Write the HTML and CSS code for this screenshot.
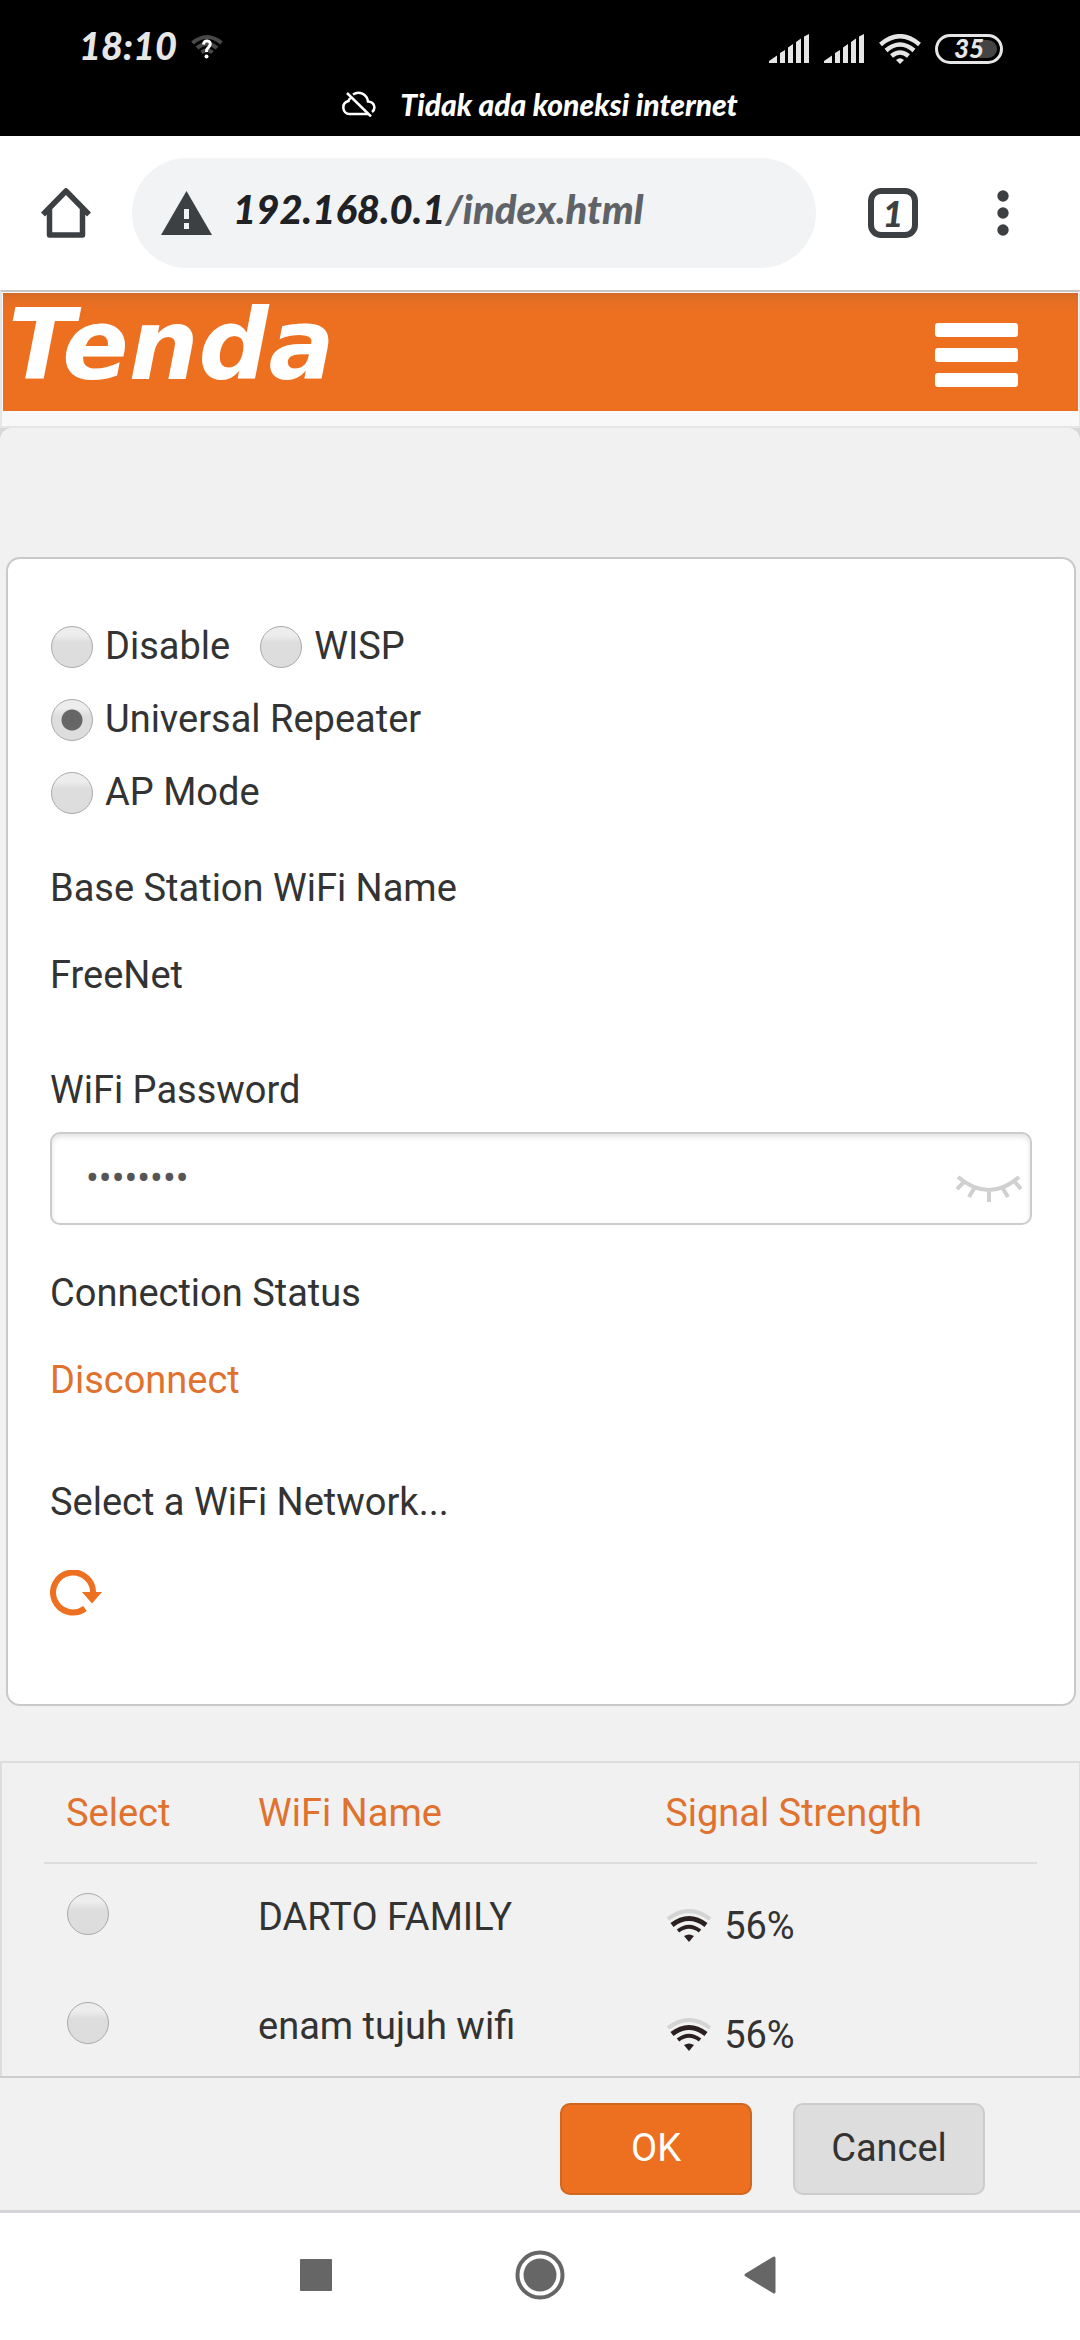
FILE: index.html
```html
<!DOCTYPE html>
<html lang="en">
<head>
<meta charset="utf-8">
<meta name="viewport" content="width=device-width, initial-scale=1">
<title>Tenda</title>
<link rel="stylesheet" href="styles.css">
</head>
<body>
<div class="status">
  <div class="status-row">
    <div class="status-group">
      <span class="clock">18:10</span>
      <svg class="wifi-unknown" width="32" height="26" viewBox="0 0 32 26" aria-hidden="true">
        <g fill="none" stroke="#484848" stroke-width="4"><path d="M1.500 9Q16-3 30.500 9"/><path d="M6 14Q16 5.500 26 14"/><path d="M10.500 18.500Q16 14 21.500 18.500"/></g>
        <path d="M12.500 10.500Q13 6.500 16.500 7Q20 7.500 19 11Q18.200 13 16.500 14.500Q15.300 15.500 15.500 18" fill="none" stroke="#fff" stroke-width="3"/>
        <circle cx="15.500" cy="22.500" r="2" fill="#fff"/>
      </svg>
    </div>
    <div class="status-group status-icons">
      <svg width="41" height="30" viewBox="0 0 41 30" fill="#e6e6e6" aria-hidden="true"><path d="M0 27L8 21.500V29H0zM11 19L16 16V29H11zM19 13.500L24 10V29H19zM27 8L32 4.500V29H27zM35 2.500L40 0V29H35z"/></svg>
      <svg width="41" height="30" viewBox="0 0 41 30" fill="#e6e6e6" aria-hidden="true"><path d="M0 27L8 21.500V29H0zM11 19L16 16V29H11zM19 13.500L24 10V29H19zM27 8L32 4.500V29H27zM35 2.500L40 0V29H35z"/></svg>
      <svg class="wifi-full" width="42" height="30" viewBox="0 0 42 30" aria-hidden="true">
        <g fill="none" stroke="#e6e6e6" stroke-width="4.500"><path d="M1.500 10.500Q21-6 40.500 10.500"/><path d="M7 16.500Q21 4.500 35 16.500"/><path d="M12.500 22Q21 15 29.500 22"/></g>
        <path d="M17 26Q21 22.500 25 26L21 30z" fill="#e6e6e6"/>
      </svg>
      <span class="battery">35</span>
    </div>
  </div>
  <div class="status-note">
    <svg width="34" height="26" viewBox="0 0 34 26" fill="none" stroke="#fff" stroke-width="2.500" aria-hidden="true"><path d="M5 2L29 25.500"/><path d="M11 3.500C17-.5 25 3 26 10.500C33 11 34 18 30 21M9 7C7 8 6.500 9.500 6.500 10C-1 12 0 22.500 7.500 23H26"/></svg>
    <span>Tidak ada koneksi internet</span>
  </div>
</div>

<div class="browser-bar">
  <button class="bare" type="button" aria-label="Home">
    <svg width="50" height="50" viewBox="0 0 50 50" fill="none" stroke="#3c4043" stroke-width="5.500" stroke-linejoin="round" aria-hidden="true"><path d="M2 26.500L25 3L48 26.500M8.500 21V47H41.500V21"/></svg>
  </button>
  <div class="address">
    <svg width="51" height="44" viewBox="0 0 51 44" aria-hidden="true"><path d="M25.500 0L51 44H0z" fill="#3c4043"/><path d="M23 18h5v10h-5zM23 32h5v6h-5z" fill="#f1f3f4"/></svg>
    <div class="url" role="textbox" aria-label="Address">192.168.0.1<span class="url-path">/index.html</span></div>
  </div>
  <button class="bare tabs" type="button" aria-label="Tabs">1</button>
  <button class="bare" type="button" aria-label="More">
    <svg width="12" height="46" viewBox="0 0 12 46" fill="#3c4043" aria-hidden="true"><circle cx="6" cy="6" r="5.700"/><circle cx="6" cy="23" r="5.700"/><circle cx="6" cy="40" r="5.700"/></svg>
  </button>
</div>

<header class="site-header">
  <div class="brand-bar">
    <a class="brand" href="#">Tenda</a>
    <button class="bare menu" type="button" aria-label="Menu"><i></i><i></i><i></i></button>
  </div>
</header>

<div class="sheet-back">
<main class="sheet">
  <form class="card" id="repeater">
    <fieldset class="modes">
      <div class="mode-row">
        <label><input type="radio" name="mode">Disable</label>
        <label><input type="radio" name="mode">WISP</label>
      </div>
      <div class="mode-row"><label><input type="radio" name="mode" checked>Universal Repeater</label></div>
      <div class="mode-row"><label><input type="radio" name="mode">AP Mode</label></div>
    </fieldset>
    <div class="field">
      <div>Base Station WiFi Name</div>
      <div>FreeNet</div>
    </div>
    <div class="field field-password">
      <label for="password">WiFi Password</label>
      <div class="password-box">
        <input id="password" type="password" value="12345678">
        <button class="bare eye" type="button" aria-label="Show password">
          <svg width="66" height="28" viewBox="0 0 66 28" fill="none" stroke="#d0d0d0" stroke-width="4" aria-hidden="true"><path d="M2 2Q33 28 63 2M9 6L1 14M19 12L13 22M33 15V27M46 12L52 22M58 6L65 14"/></svg>
        </button>
      </div>
    </div>
    <div class="field">
      <div>Connection Status</div>
      <div class="accent">Disconnect</div>
    </div>
    <div class="field field-scan">
      <div>Select a WiFi Network...</div>
      <button class="bare refresh" type="button" aria-label="Refresh">
        <svg width="52" height="46" viewBox="0 0 52 46" aria-hidden="true"><path d="M35 38.500A20 20 0 1 1 43 24" fill="none" stroke="#ed7020" stroke-width="6"/><path d="M32 22H52L42 33.500z" fill="#ed7020"/></svg>
      </button>
    </div>
  </form>

  <div class="networks">
    <table>
      <thead><tr><th class="col-select">Select</th><th class="col-name">WiFi Name</th><th>Signal Strength</th></tr></thead>
      <tbody>
        <tr>
          <td class="pick"><input type="radio" name="network" aria-label="DARTO FAMILY"></td>
          <td>DARTO FAMILY</td>
          <td><div class="signal"><svg width="44" height="34" viewBox="0 0 44 34" fill="none" aria-hidden="true"><path d="M1 10Q22-6 43 10" stroke="#d4d4d4" stroke-width="4"/><path d="M5 16Q22 3 39 16" stroke="#2b2020" stroke-width="5"/><path d="M11 22Q22 13.500 33 22" stroke="#2b2020" stroke-width="4"/><path d="M17 27Q22 24 27 27L22 33z" fill="#2b2020"/></svg>56%</div></td>
        </tr>
        <tr>
          <td class="pick"><input type="radio" name="network" aria-label="enam tujuh wifi"></td>
          <td>enam tujuh wifi</td>
          <td><div class="signal"><svg width="44" height="34" viewBox="0 0 44 34" fill="none" aria-hidden="true"><path d="M1 10Q22-6 43 10" stroke="#d4d4d4" stroke-width="4"/><path d="M5 16Q22 3 39 16" stroke="#2b2020" stroke-width="5"/><path d="M11 22Q22 13.500 33 22" stroke="#2b2020" stroke-width="4"/><path d="M17 27Q22 24 27 27L22 33z" fill="#2b2020"/></svg>56%</div></td>
        </tr>
      </tbody>
    </table>
  </div>
</main>
</div>

<footer class="actions">
  <button class="btn btn-ok" type="submit" form="repeater">OK</button>
  <button class="btn btn-cancel" type="button">Cancel</button>
</footer>

<nav class="system-nav">
  <button class="bare" type="button" aria-label="Recent apps"><svg width="32" height="32" viewBox="0 0 32 32" aria-hidden="true"><rect width="32" height="32" rx="1" fill="#666"/></svg></button>
  <button class="bare" type="button" aria-label="Home screen"><svg width="50" height="50" viewBox="0 0 50 50" aria-hidden="true"><circle cx="25" cy="25" r="22.500" fill="none" stroke="#666" stroke-width="4"/><circle cx="25" cy="25" r="16.500" fill="#666"/></svg></button>
  <button class="bare" type="button" aria-label="Back"><svg width="40" height="40" viewBox="0 0 40 40" aria-hidden="true"><path d="M2 20L30 3V37z" fill="#666" stroke="#666" stroke-width="3" stroke-linejoin="round"/></svg></button>
</nav>
</body>
</html>
```
FILE: styles.css
```css
* {
  box-sizing: border-box;
}

body {
  margin: 0;
  height: 100vh;
  display: flex;
  flex-direction: column;
  background: #fff;
  color: #333;
  font: 38px/44px Roboto, sans-serif;
}

svg {
  display: block;
  flex: none;
}

.bare {
  padding: 0;
  border: 0;
  background: none;
  color: inherit;
  font: inherit;
}

/* Phone status bar */
.status {
  flex: none;
  padding-bottom: 18px;
  background: #000;
  color: #fff;
  font-family: Lato, sans-serif;
  font-weight: 900;
  font-style: italic;
}

.status-row {
  display: flex;
  align-items: center;
  justify-content: space-between;
  height: 90px;
  padding: 0 77px 0 79px;
}

.status-group {
  display: flex;
  align-items: center;
  gap: 14px;
}

.status-icons {
  padding-top: 8px;
}

.wifi-unknown {
  margin-top: 4px;
}

.clock {
  color: #e6e6e6;
  font-size: 38px;
}

.battery {
  width: 68px;
  height: 30px;
  border: 3px solid #e6e6e6;
  border-radius: 15px;
  background: linear-gradient(to right, #000 38px, #444 38px) content-box;
  padding: 3px;
  color: #e6e6e6;
  font-size: 26px;
  line-height: 16px;
  text-align: center;
}

.status-note {
  display: flex;
  align-items: center;
  justify-content: center;
  gap: 24px;
  height: 28px;
  font-size: 30px;
  line-height: 28px;
}

/* Browser toolbar */
.browser-bar {
  flex: none;
  display: flex;
  align-items: center;
  padding: 22px 71px 22px 41px;
  color: #3c4043;
  font-family: Lato, sans-serif;
  font-weight: 900;
  font-style: italic;
}

.address {
  flex: 1;
  display: flex;
  align-items: center;
  gap: 21px;
  height: 110px;
  margin: 0 52px 0 41px;
  padding: 0 29px;
  border-radius: 55px;
  background: #f1f3f4;
}

.url {
  padding-bottom: 8px;
  color: #202124;
  font-size: 40px;
}

.url-path {
  color: #5f6368;
}

.tabs {
  width: 50px;
  height: 50px;
  margin-right: 79px;
  border: 6px solid #3c4043;
  border-radius: 13px;
  font-size: 36px;
  line-height: 36px;
}

/* Router page header */
.site-header {
  flex: none;
  padding: 1px 1px 15px;
  border: 2px solid #e6e6e6;
  border-width: 2px 1px 2px 2px;
  border-top-color: #c6c6c4;
  background: #f8f8f8;
}

.brand-bar {
  display: flex;
  align-items: flex-start;
  justify-content: space-between;
  height: 118px;
  padding: 0 60px 0 5px;
  background: linear-gradient(#d46a26, #e36e24 7px, #ed7020 18px);
}

.brand {
  color: #fff;
  font: italic 700 98px/104px "DejaVu Sans", sans-serif;
  text-decoration: none;
}

.menu {
  display: grid;
  gap: 11px;
  padding-top: 30px;
}

.menu i {
  width: 83px;
  height: 14px;
  border-radius: 3px;
  background: #fff;
}

/* Settings */
.sheet-back {
  flex: 1;
  min-height: 0;
  display: flex;
  background: #d8d8d8;
}

.sheet {
  flex: 1;
  overflow: hidden;
  padding-top: 129px;
  border-radius: 12px 12px 0 0;
  background: #f1f1f1;
}

.card {
  margin: 0 4px 55px 6px;
  padding: 50px 42px 88px;
  border: 2px solid #c9c9c9;
  border-radius: 14px;
  background: #fff;
}

.modes {
  margin: 0 0 38px;
  padding: 0;
  border: 0;
}

.mode-row {
  display: flex;
  align-items: center;
  gap: 29px;
  height: 73px;
}

.mode-row label {
  display: flex;
  align-items: center;
  gap: 12px;
}

input[type="radio"] {
  appearance: none;
  flex: none;
  display: block;
  width: 42px;
  height: 42px;
  margin: 2px 0 0 1px;
  border: 1px solid #aaa;
  border-radius: 50%;
  background: linear-gradient(#ededed 20%, #ddd 40%);
}

input[type="radio"]:checked {
  background: radial-gradient(circle, #666 10px, transparent 11px), linear-gradient(#ededed 20%, #ddd 40%);
}

.field {
  display: grid;
  gap: 43px;
}

.field-password {
  gap: 20px;
  margin: 71px 0 46px;
}

.field-scan {
  gap: 46px;
  margin-top: 78px;
}

.password-box {
  display: flex;
  align-items: center;
  height: 93px;
  padding-right: 8px;
  border: 2px solid #ccc;
  border-radius: 10px;
  box-shadow: inset 0 3px 5px #e4e4e4;
}

.password-box input {
  flex: 1;
  min-width: 0;
  height: 100%;
  padding: 0 34px 1px;
  border: 0;
  outline: 0;
  background: none;
  color: #555;
  font: inherit;
}

.eye {
  padding-top: 20px;
}

.accent,
.networks th {
  color: #e0722f;
}

.refresh {
  justify-self: start;
}

/* Network list */
.networks {
  padding: 0 42px;
  border: 2px solid #ddd;
  border-width: 2px 1px 0 2px;
}

.networks table {
  width: 100%;
  border-collapse: separate;
  border-spacing: 0;
  table-layout: fixed;
}

.networks th,
.networks td {
  height: 109px;
  padding: 0 0 3px 22px;
  font-weight: 400;
  text-align: left;
}

.networks th {
  height: 101px;
  padding-bottom: 0;
  border-bottom: 2px solid #ddd;
}

.networks .col-select {
  width: 192px;
}

.networks .col-name {
  width: 41%;
}

.networks .pick {
  padding-bottom: 11px;
}

.signal {
  display: flex;
  align-items: center;
  gap: 13px;
  padding: 17px 0 0 2px;
}

/* Bottom bars */
.actions {
  flex: none;
  display: flex;
  justify-content: flex-end;
  gap: 41px;
  padding: 25px 95px 15px;
  border-top: 2px solid #ccc;
  border-bottom: 3px solid #d4d4d8;
  background: #f1f1f1;
}

.btn {
  width: 192px;
  height: 92px;
  padding: 0 0 3px;
  border: 2px solid #ccc;
  border-radius: 10px;
  background: #ddd;
  color: #333;
  font: inherit;
}

.btn-ok {
  border-color: #d0671f;
  background: #ed7020;
  color: #fff;
}

.system-nav {
  flex: none;
  display: grid;
  grid-template-columns: 50px 50px 50px;
  justify-content: center;
  justify-items: center;
  align-items: center;
  gap: 174px;
  height: 127px;
  padding-bottom: 3px;
}
```
